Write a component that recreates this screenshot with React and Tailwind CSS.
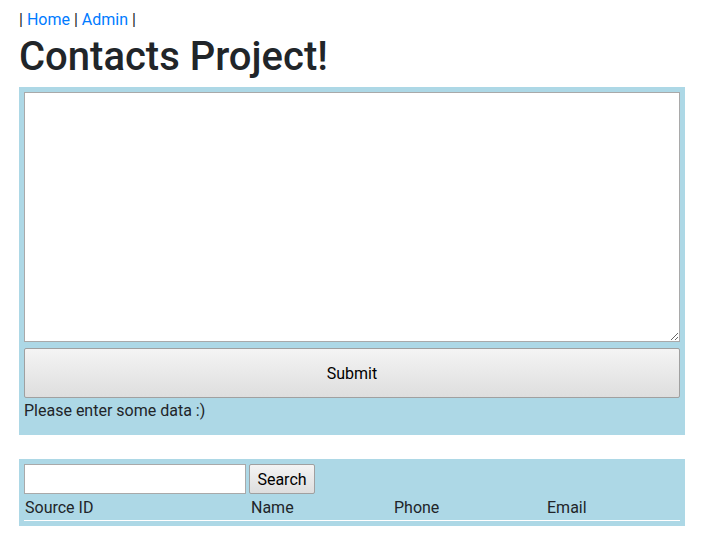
import React, { useState } from "react";

export default function App() {
  const [text, setText] = useState("");
  const [query, setQuery] = useState("");

  return (
    <div className="min-h-screen bg-white px-[19px] pt-2 text-[16px] leading-6 text-[#212529] font-['Roboto','Liberation_Sans',sans-serif]">
      <nav>
        | <a href="#" className="text-[#007bff]">Home</a> |{" "}
        <a href="#" className="text-[#007bff]">Admin</a> |
      </nav>
      <h1 className="mb-[5px] text-[40px] font-medium leading-[50px]">
        Contacts Project!
      </h1>

      {/* entry form */}
      <div className="w-[666px] bg-[#add8e6] p-[5px] pb-[12px]">
        <textarea
          value={text}
          onChange={(e) => setText(e.target.value)}
          className="block h-[250px] w-[656px] border border-[#a9a9a9] bg-white p-[2px] outline-none"
        />
        <button className="mt-[6px] block h-[50px] w-[656px] rounded-[2px] border border-[#a0a0a0] bg-gradient-to-b from-[#f4f4f4] to-[#dedede] pt-[2px] text-black">
          Submit
        </button>
        <p className="pt-[1px]">Please enter some data :)</p>
      </div>

      {/* search + results */}
      <div className="mt-6 w-[666px] bg-[#add8e6] p-[5px]">
        <div className="flex gap-[3px]">
          <input
            value={query}
            onChange={(e) => setQuery(e.target.value)}
            className="h-[30px] w-[222px] border border-[#a9a9a9] bg-white px-1 outline-none"
          />
          <button className="h-[30px] w-[66px] rounded-[2px] border border-[#a0a0a0] bg-gradient-to-b from-[#f4f4f4] to-[#dedede] pt-[2px] text-black">
            Search
          </button>
        </div>
        <div className="grid grid-cols-[226px_143px_153px_134px] border-b border-white">
          <div className="px-[1px] pt-[2px]">Source ID</div>
          <div className="px-[1px] pt-[2px]">Name</div>
          <div className="px-[1px] pt-[2px]">Phone</div>
          <div className="px-[1px] pt-[2px]">Email</div>
        </div>
      </div>
    </div>
  );
}
